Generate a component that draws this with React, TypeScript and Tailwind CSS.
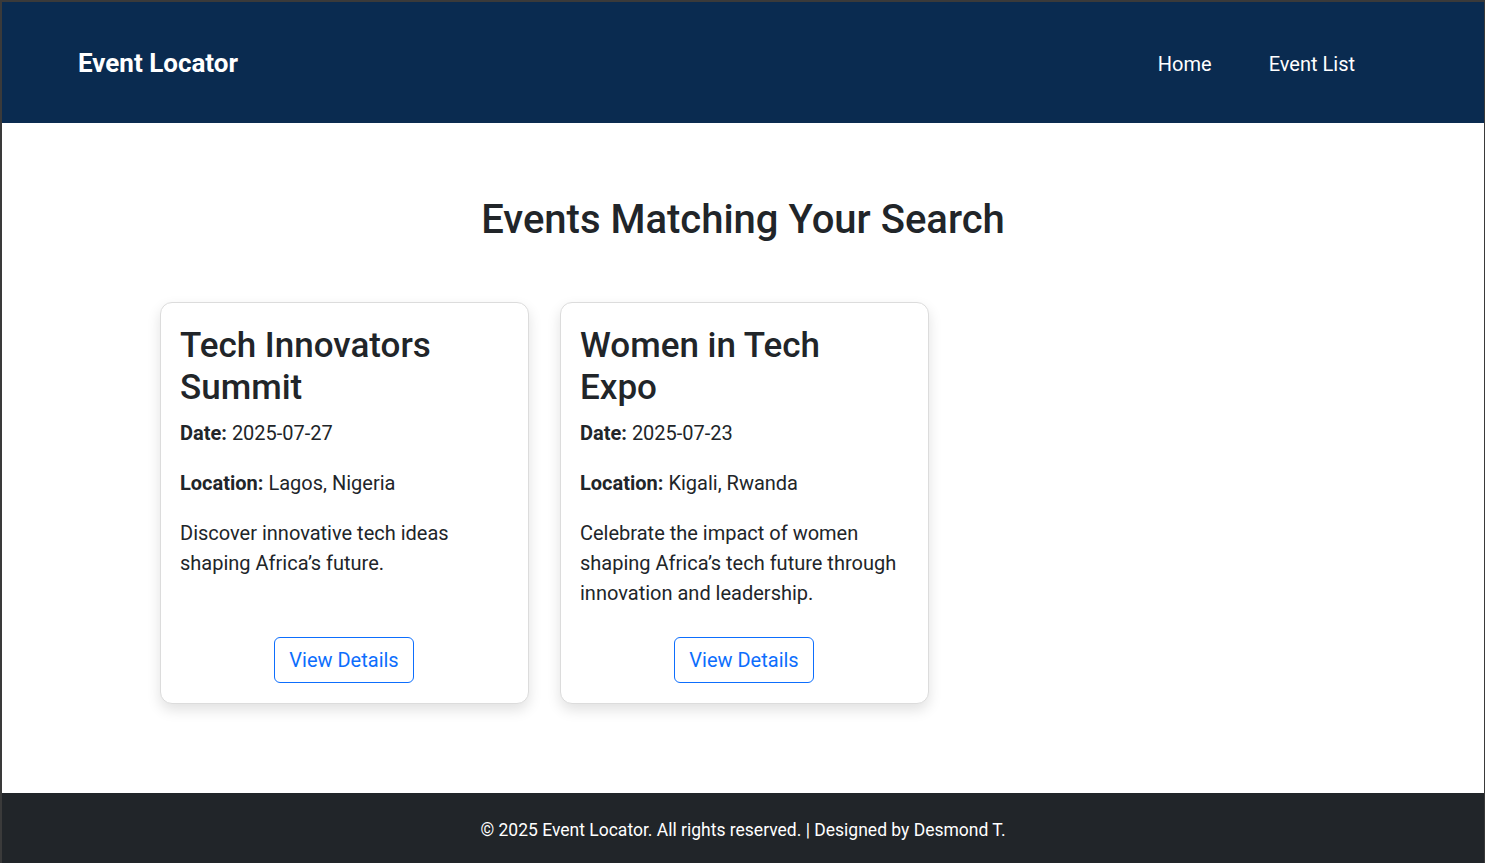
import React from 'react'

interface EventItem {
  id: number
  title: string
  date: string
  location: string
  description: string
}

const events: EventItem[] = [
  {
    id: 1,
    title: 'Tech Innovators Summit',
    date: '2025-07-27',
    location: 'Lagos, Nigeria',
    description: 'Discover innovative tech ideas shaping Africa\u2019s future.',
  },
  {
    id: 2,
    title: 'Women in Tech Expo',
    date: '2025-07-23',
    location: 'Kigali, Rwanda',
    description: 'Celebrate the impact of women shaping Africa\u2019s tech future through innovation and leadership.',
  },
]

const EventCard: React.FC<{ event: EventItem }> = ({ event }) => (
  <div className="w-[369px] flex flex-col bg-white border border-[#dcdcdc] rounded-xl pl-[19px] pr-6 pt-[22px] pb-5 shadow-[0_6px_14px_rgba(0,0,0,0.12)]">
    <h3 className="text-[35px] leading-[42px] font-medium text-[#212529] mb-[9px]">{event.title}</h3>
    <p className="text-[20px] leading-[30px] mb-5">
      <span className="font-bold">Date:</span> {event.date}
    </p>
    <p className="text-[20px] leading-[30px] mb-5">
      <span className="font-bold">Location:</span> {event.location}
    </p>
    <p className="text-[20px] leading-[30px] mb-[29px]">{event.description}</p>
    <div className="mt-auto flex justify-center pl-1">
      <button className="border border-[#0d6efd] text-[#0d6efd] rounded-md px-[14px] py-[7px] text-[20px] leading-[30px]">
        View Details
      </button>
    </div>
  </div>
)

export default function App() {
  return (
    <div className="min-h-screen bg-[#3a3a3a] pt-[2px] pl-[2px] pr-[1px] font-['Roboto',sans-serif] text-[#212529]">
      <div className="bg-white flex flex-col min-h-[861px]">
        {/* Header */}
        <header className="bg-[#0a2b50] h-[121px] flex items-center justify-between pl-[76px] pr-[129px]">
          <span className="text-white font-bold text-[26px] leading-[32px]">Event Locator</span>
          <nav className="flex gap-[57px] text-white text-[20px] pt-[2px]">
            <a href="#">Home</a>
            <a href="#">Event List</a>
          </nav>
        </header>

        {/* Main */}
        <main className="flex-1 pt-[73px] pb-[89px]">
          <h2 className="text-center text-[40px] leading-[48px] font-medium mb-[58px]">Events Matching Your Search</h2>
          <div className="w-[1166px] mx-auto flex gap-[31px] items-stretch">
            {events.map((e) => (
              <EventCard key={e.id} event={e} />
            ))}
          </div>
        </main>

        {/* Footer */}
        <footer className="bg-[#212529] h-[70px] flex items-center justify-center pt-1 text-white text-[17.5px]">
          © 2025 Event Locator. All rights reserved. | Designed by Desmond T.
        </footer>
      </div>
    </div>
  )
}
